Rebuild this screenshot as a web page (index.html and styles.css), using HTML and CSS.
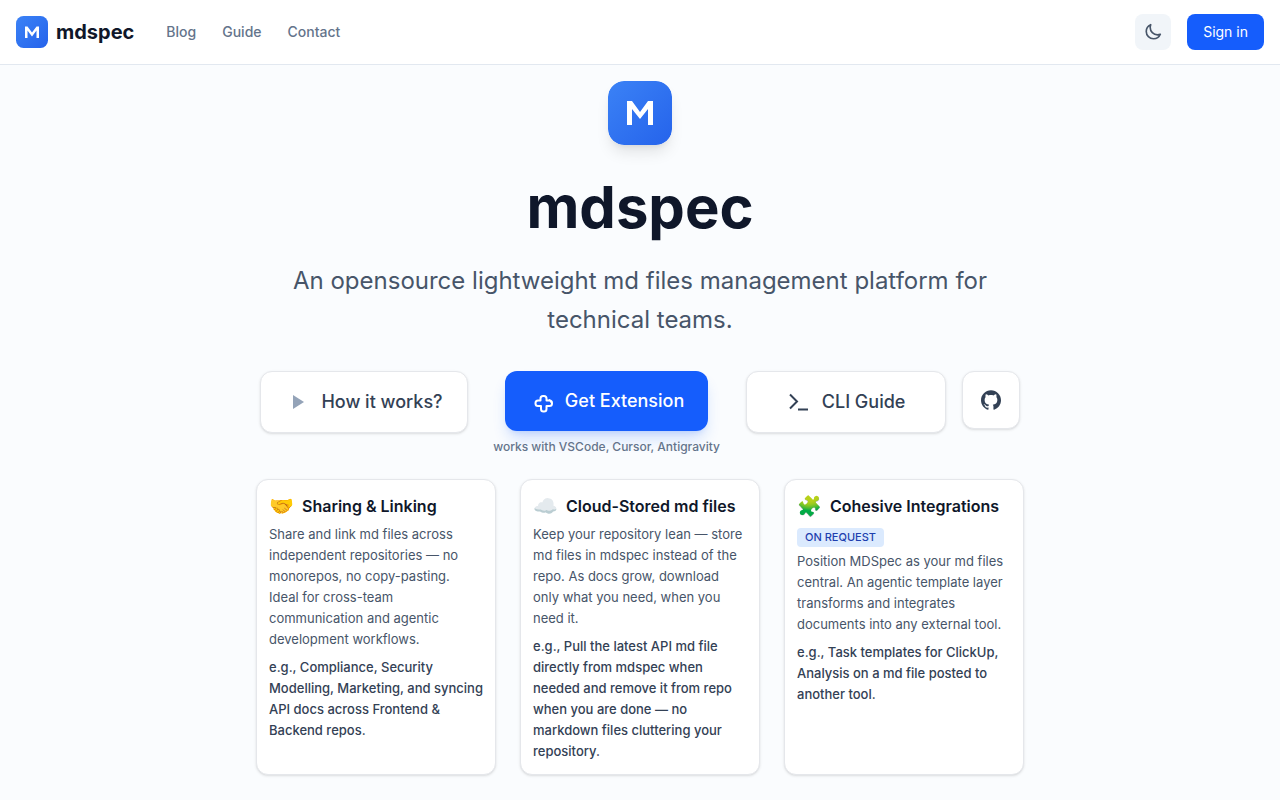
FILE: index.html
```html
<!DOCTYPE html>
<html lang="en">
<head>
<meta charset="utf-8">
<meta name="viewport" content="width=device-width, initial-scale=1">
<title>mdspec</title>
<link rel="stylesheet" href="styles.css">
</head>
<body>
<header class="topbar">
  <a class="brand" href="#">
    <svg class="brand-mark" viewBox="0 0 64 64" aria-hidden="true">
      <defs><linearGradient id="g1" x1="0" y1="0" x2="1" y2="1"><stop offset="0" stop-color="#3b82f6"/><stop offset="1" stop-color="#2563eb"/></linearGradient></defs>
      <rect width="64" height="64" rx="15" fill="url(#g1)"/>
      <path d="M18 44V21h5l9 12 9-12h5v23h-5V29l-9 12-9-12v15z" fill="#fff"/>
    </svg>
    <span class="brand-name">mdspec</span>
  </a>
  <nav class="nav">
    <a href="#">Blog</a>
    <a href="#">Guide</a>
    <a href="#">Contact</a>
  </nav>
  <button class="theme" type="button" aria-label="Toggle dark mode">
    <svg viewBox="0 0 24 24" width="18" height="18" fill="none" stroke="currentColor" stroke-width="2.200" stroke-linecap="round" stroke-linejoin="round" aria-hidden="true"><path d="M21.750 15A9.720 9.720 0 0 1 18 15.750C12.620 15.750 8.250 11.380 8.250 6c0-1.330.270-2.600.750-3.750A9.750 9.750 0 0 0 3 11.250C3 16.640 7.360 21 12.750 21a9.750 9.750 0 0 0 9-6z"/></svg>
  </button>
  <button class="signin" type="button">Sign in</button>
</header>
<main class="hero">
  <svg class="hero-mark" viewBox="0 0 64 64" aria-hidden="true">
    <rect width="64" height="64" rx="16" fill="url(#g1)"/>
    <path d="M19 44V20h5l8 11 8-11h5v24h-5V28l-8 10-8-10v16z" fill="#fff"/>
  </svg>
  <h1 class="title">mdspec</h1>
  <p class="tagline">An opensource lightweight md files management platform for technical teams.</p>
  <div class="actions">
    <a class="btn" href="#">
      <svg class="icon play" viewBox="0 0 24 24" aria-hidden="true"><path d="M8 5v14l11-7z" fill="currentColor"/></svg>
      How it works?
    </a>
    <div class="extension">
      <a class="btn primary" href="#">
        <svg class="icon" viewBox="0 0 24 24" fill="none" stroke="currentColor" stroke-width="2" stroke-linecap="round" stroke-linejoin="round" aria-hidden="true"><path d="M11.500 11.500V9.500a2.500 2.500 0 0 1 2.500-2.500h1a2.500 2.500 0 0 1 2.500 2.500v2h3a2.500 2.500 0 0 1 2.500 2.500v.500a2.500 2.500 0 0 1-2.500 2.500h-3v3a2.500 2.500 0 0 1-2.500 2.500h-.500a2.500 2.500 0 0 1-2.500-2.500v-3h-3a2.500 2.500 0 0 1-2.500-2.500v-.500a2.500 2.500 0 0 1 2.500-2.500zM20.500 11l2 1.500v1z"/></svg>
        Get Extension
      </a>
      <span class="note">works with VSCode, Cursor, Antigravity</span>
    </div>
    <a class="btn cli" href="#">
      <svg class="icon" viewBox="0 0 24 24" fill="none" stroke="currentColor" stroke-width="2" aria-hidden="true"><path d="M4 4.500l7 7-7 7M12 19.500h10"/></svg>
      CLI Guide
    </a>
    <a class="btn github" href="#" aria-label="GitHub">
      <svg viewBox="0 0 24 24" width="20" height="20" fill="currentColor" aria-hidden="true"><path d="M12 .297c-6.630 0-12 5.373-12 12 0 5.303 3.438 9.800 8.205 11.385.6.113.82-.258.82-.577 0-.285-.01-1.040-.015-2.040-3.338.724-4.042-1.610-4.042-1.610C4.422 18.070 3.633 17.700 3.633 17.700c-1.087-.744.084-.729.084-.729 1.205.084 1.838 1.236 1.838 1.236 1.070 1.835 2.809 1.305 3.495.998.108-.776.417-1.305.76-1.605-2.665-.3-5.466-1.332-5.466-5.930 0-1.310.465-2.380 1.235-3.220-.135-.303-.54-1.523.105-3.176 0 0 1.005-.322 3.300 1.230.96-.267 1.980-.399 3-.405 1.020.006 2.040.138 3 .405 2.280-1.552 3.285-1.230 3.285-1.230.645 1.653.24 2.873.12 3.176.765.840 1.230 1.910 1.230 3.220 0 4.610-2.805 5.625-5.475 5.920.42.360.81 1.096.81 2.220 0 1.606-.015 2.896-.015 3.286 0 .315.210.690.825.570C20.565 22.092 24 17.592 24 12.297c0-6.627-5.373-12-12-12"/></svg>
    </a>
  </div>
  <div class="cards">
    <article class="card">
      <h2 class="card-title"><span class="emoji">🤝</span>Sharing &amp; Linking</h2>
      <p class="card-text">Share and link md files across independent repositories — no monorepos, no copy-pasting. Ideal for cross-team communication and agentic development workflows.</p>
      <p class="card-example">e.g., Compliance, Security Modelling, Marketing, and syncing API docs across Frontend &amp; Backend repos.</p>
    </article>
    <article class="card">
      <h2 class="card-title"><span class="emoji">☁️</span>Cloud-Stored md files</h2>
      <p class="card-text">Keep your repository lean — store md files in mdspec instead of the repo. As docs grow, download only what you need, when you need it.</p>
      <p class="card-example">e.g., Pull the latest API md file directly from mdspec when needed and remove it from repo when you are done — no markdown files cluttering your repository.</p>
    </article>
    <article class="card">
      <h2 class="card-title"><span class="emoji">🧩</span>Cohesive Integrations</h2>
      <span class="badge">ON REQUEST</span>
      <p class="card-text">Position MDSpec as your md files central. An agentic template layer transforms and integrates documents into any external tool.</p>
      <p class="card-example">e.g., Task templates for ClickUp, Analysis on a md file posted to another tool.</p>
    </article>
  </div>
</main>
</body>
</html>
```
FILE: styles.css
```css
* { box-sizing: border-box; }
body {
  margin: 0;
  min-height: 100vh;
  background: #fafcfe;
  color: #0f172a;
  font-family: Inter, "Liberation Sans", sans-serif;
}
a { color: inherit; text-decoration: none; }
h1, h2, p { margin: 0; }
button { border: 0; font: inherit; cursor: pointer; }
svg { display: block; flex: none; }

.topbar {
  display: flex;
  align-items: center;
  padding: 14px 16px;
  background: #fff;
  border-bottom: 1px solid #e2e8f0;
}
.brand { display: flex; align-items: center; gap: 8px; }
.brand-mark { width: 32px; height: 32px; }
.brand-name { font-size: 20px; line-height: 28px; font-weight: 700; }
.nav {
  display: flex;
  gap: 26px;
  margin-left: 32px;
  color: #64748b;
  font-size: 14px;
  line-height: 20px;
  font-weight: 500;
}
.theme {
  display: grid;
  place-items: center;
  width: 36px;
  height: 36px;
  margin-left: auto;
  padding: 0;
  border-radius: 8px;
  background: #f1f5f9;
  color: #475569;
}
.signin {
  margin-left: 16px;
  padding: 8px 16px;
  border-radius: 8px;
  background: #155dfc;
  color: #fff;
  font-size: 14px;
  line-height: 20px;
}

.hero {
  display: flex;
  flex-direction: column;
  align-items: center;
  max-width: 800px;
  margin: 0 auto;
  padding: 16px;
}
.hero-mark {
  width: 64px;
  height: 64px;
  border-radius: 16px;
  box-shadow: 0 10px 15px -3px rgba(0, 0, 0, .1), 0 4px 6px -4px rgba(0, 0, 0, .1);
}
.title { margin-top: 32px; font-size: 58px; line-height: 60px; font-weight: 700; }
.tagline {
  margin-top: 24px;
  color: #475569;
  font-size: 24px;
  line-height: 39px;
  text-align: center;
}

.actions {
  display: flex;
  flex-wrap: wrap;
  justify-content: center;
  align-items: flex-start;
  gap: 16px;
  margin-top: 32px;
}
.btn {
  display: flex;
  align-items: center;
  justify-content: center;
  gap: 12px;
  padding: 16px 24px;
  border: 1px solid #e5e7eb;
  border-radius: 12px;
  background: #fff;
  color: #334155;
  font-size: 18px;
  line-height: 28px;
  font-weight: 500;
  box-shadow: 0 1px 3px rgba(0, 0, 0, .1), 0 1px 2px -1px rgba(0, 0, 0, .1);
}
.icon { width: 24px; height: 24px; overflow: visible; }
.play { color: #94a3b8; }
.primary {
  border: 0;
  background: #155dfc;
  color: #fff;
  box-shadow: 0 10px 15px -3px rgba(21, 93, 252, .2), 0 4px 6px -4px rgba(21, 93, 252, .2);
}
.extension {
  display: flex;
  flex-direction: column;
  align-items: center;
  gap: 8px;
  min-width: 246px;
}
.note { color: #64748b; font-size: 12px; line-height: 16px; font-weight: 500; }
.cli { min-width: 200px; }
.github { width: 58px; height: 58px; padding: 0; }

.cards {
  display: grid;
  grid-template-columns: repeat(auto-fit, minmax(220px, 1fr));
  gap: 24px;
  width: 100%;
  margin-top: 24px;
}
.card {
  padding: 12px;
  border: 1px solid #e5e7eb;
  border-radius: 12px;
  background: #fff;
  box-shadow: 0 1px 3px rgba(0, 0, 0, .1), 0 1px 2px -1px rgba(0, 0, 0, .1);
}
.card-title {
  display: flex;
  align-items: center;
  gap: 8px;
  margin-bottom: 4px;
  font-size: 16px;
  line-height: 28px;
  font-weight: 600;
}
.emoji { font-size: 20px; }
.badge {
  display: inline-block;
  margin: 4px 0;
  padding: 2px 8px;
  border-radius: 4px;
  background: #dbeafe;
  color: #1e40af;
  font-size: 11px;
  line-height: 15px;
  font-weight: 500;
  vertical-align: top;
}
.card-text, .card-example { font-size: 13px; line-height: 21px; }
.card-text { color: #475569; }
.card-example { margin-top: 7px; color: #334155; font-weight: 500; }
```
